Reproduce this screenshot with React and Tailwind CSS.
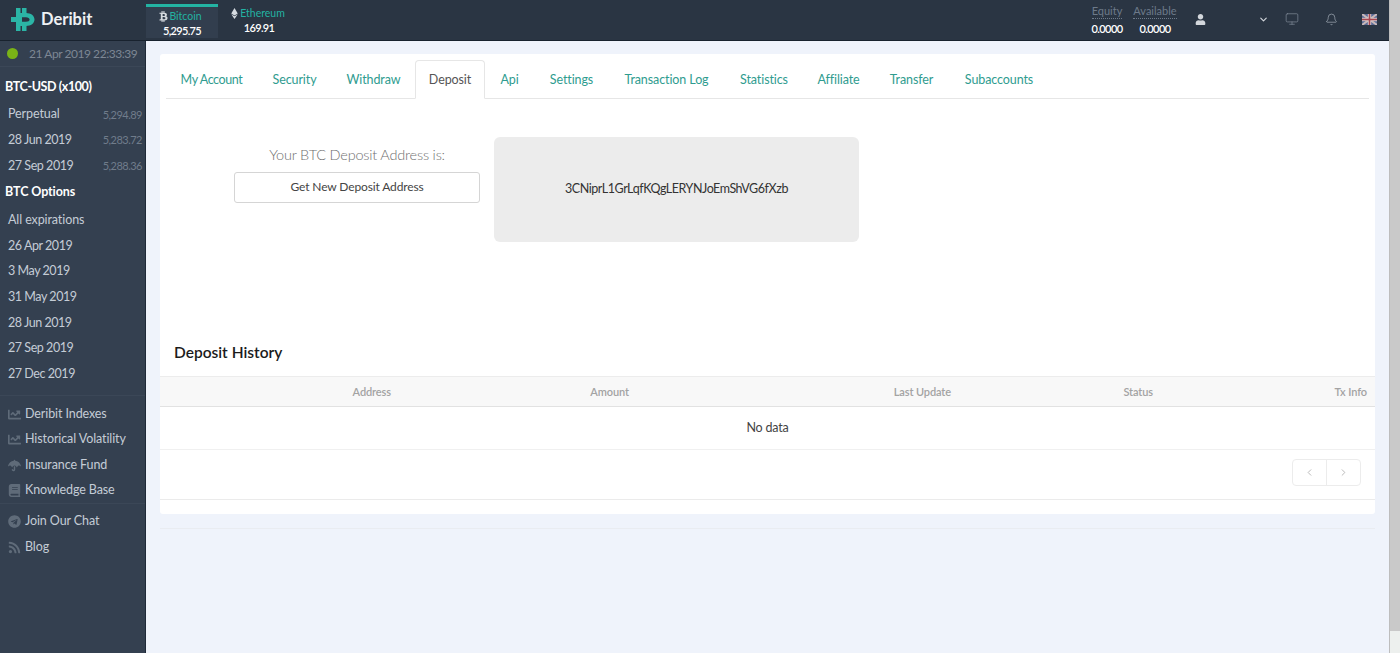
import React from "react";
import { FaUser, FaChartLine, FaUmbrella, FaBook, FaTelegram, FaRss, FaBtc, FaEthereum } from "react-icons/fa";
import { Monitor, Bell, ChevronDown, ChevronLeft, ChevronRight } from "lucide-react";

function Logo() {
  return (
    <svg width="25" height="23" viewBox="0 0 25 23" className="shrink-0">
      <g fill="#2bb5a6">
        <rect x="6" y="0" width="4.5" height="6" />
        <rect x="12" y="0" width="4.5" height="6" />
        <rect x="6" y="17" width="4.5" height="6" />
        <rect x="12" y="17" width="4.5" height="6" />
        <rect x="1" y="9" width="6" height="5" />
      </g>
      <path fillRule="evenodd" d="M6 5H16C21 5 24.5 7.8 24.5 11.5S21 18 16 18H6ZM12 9.2V13.8H16C18.2 13.8 19.6 12.8 19.6 11.5S18.2 9.2 16 9.2Z" fill="#2bb5a6" />
    </svg>
  );
}

function Flag() {
  return (
    <svg width="15" height="11" viewBox="0 0 15 11" className="shrink-0">
      <rect width="15" height="11" fill="#5a6a95" />
      <path d="M0 0L15 11M15 0L0 11" stroke="#c9b8b8" strokeWidth="2" />
      <rect x="5.8" width="3.4" height="11" fill="#d8d0d0" />
      <rect y="3.8" width="15" height="3.4" fill="#d8d0d0" />
      <rect x="6.7" width="1.6" height="11" fill="#a8454f" />
      <rect y="4.7" width="15" height="1.6" fill="#a8454f" />
    </svg>
  );
}

function Balance({ label, w }) {
  return (
    <div className={`flex flex-col items-center ${w}`}>
      <span className="text-[11px] leading-[14px] text-[#6d7a8a] border-b border-dotted border-[#6d7a8a] whitespace-nowrap">{label}</span>
      <span className="text-[11px] leading-[14px] mt-[3px] font-semibold tracking-[-0.6px] text-white">0.0000</span>
    </div>
  );
}

function Header() {
  return (
    <header className="h-[41px] shrink-0 flex items-stretch bg-[#2a3543] border-b border-[#18222e]">
      <div className="w-[146px] shrink-0 flex items-center pl-[10px] gap-[6px] pb-[1px]">
        <Logo />
        <span className="text-[16.5px] font-bold text-[#eef1f4]">Deribit</span>
      </div>
      <div className="w-[72px] mt-[4px] mb-[2px] border-t-[3px] border-[#23b3a3] bg-[#323e4e] flex flex-col items-center pt-[2px]">
        <span className="flex items-center pr-[4px] text-[10.5px] leading-[14px] text-[#23b3a3]"><FaBtc className="text-[#d5dae0] text-[11px]" />Bitcoin</span>
        <span className="text-[11px] leading-[14px] font-semibold tracking-[-0.7px] text-white mt-[1px]">5,295.75</span>
      </div>
      <div className="w-[82px] flex flex-col items-center pt-[6px]">
        <span className="flex items-center pr-[4px] text-[10.5px] leading-[14px] text-[#23b3a3]"><FaEthereum className="text-[#d5dae0] text-[11px]" />Ethereum</span>
        <span className="text-[11px] leading-[14px] font-semibold tracking-[-0.7px] text-white mt-[1px]">169.91</span>
      </div>
      <div className="flex-1" />
      <div className="flex items-start pt-[4px]">
        <Balance label="Equity" w="w-[30px]" />
        <div className="w-[11px]" />
        <Balance label="Available" w="w-[44px]" />
      </div>
      <div className="flex items-center text-[#d3d7dc] h-[38px]">
        <FaUser className="ml-[18px] text-[11px]" />
        <ChevronDown size={11} strokeWidth={2.5} className="ml-[52px]" />
        <Monitor size={14} strokeWidth={1.25} className="ml-[16px] text-[#7d8896]" />
        <Bell size={13} strokeWidth={1.25} className="ml-[26px] text-[#a6afb9]" />
        <div className="ml-[24px] mr-[12px]"><Flag /></div>
      </div>
    </header>
  );
}

function Row({ children, right, date }) {
  return (
    <div className="h-[25.6px] flex items-center justify-between pl-[8px] pr-[3px] text-[#c4ccd6] text-[12.5px]">
      <span className={date ? "tracking-[-0.45px] whitespace-nowrap" : "tracking-[-0.1px] whitespace-nowrap"}>{children}</span>
      {right && <span className="text-[11px] tracking-[-0.5px] text-[#707c8b]">{right}</span>}
    </div>
  );
}

function Title({ children, tight }) {
  return <div className={`h-[26px] flex items-center pl-[5px] text-[12.5px] font-bold text-white ${tight ? "tracking-[-0.4px]" : "tracking-[-0.1px]"}`}>{children}</div>;
}

function Link({ Icon, children }) {
  return (
    <div className="h-[25.5px] flex items-center pl-[8px] text-[#c4ccd6] text-[12.5px]">
      <span className="w-[17px] shrink-0 text-[#5f6b79]"><Icon className="text-[13px]" /></span>
      <span className="tracking-[-0.1px] whitespace-nowrap">{children}</span>
    </div>
  );
}

function Sidebar() {
  return (
    <aside className="w-[146px] shrink-0 bg-[#344050] border-r border-[#1f2a38]">
      <div className="h-[26px] flex items-center pl-[7px] border-b border-[#3b4757]">
        <span className="w-[11px] h-[11px] rounded-full bg-[#7ab317] shrink-0" />
        <span className="ml-[11px] text-[12px] tracking-[-0.45px] whitespace-nowrap text-[#7d8794]">21 Apr 2019 22:33:39</span>
      </div>
      <div className="pt-[7px]">
        <Title tight>BTC-USD (x100)</Title>
        <div className="pt-[2px] pb-[1px]">
          <Row right="5,294.89">Perpetual</Row>
          <Row right="5,283.72" date>28 Jun 2019</Row>
          <Row right="5,288.36" date>27 Sep 2019</Row>
        </div>
        <Title>BTC Options</Title>
        <div className="pt-[2px]">
          <Row>All expirations</Row>
          {["26 Apr 2019", "3 May 2019", "31 May 2019", "28 Jun 2019", "27 Sep 2019", "27 Dec 2019"].map((t) => (
            <Row key={t} date>{t}</Row>
          ))}
        </div>
      </div>
      <div className="mt-[8px] pt-[5.5px] border-t border-[#3b4757]">
        <Link Icon={FaChartLine}>Deribit Indexes</Link>
        <Link Icon={FaChartLine}>Historical Volatility</Link>
        <Link Icon={FaUmbrella}>Insurance Fund</Link>
        <Link Icon={FaBook}>Knowledge Base</Link>
      </div>
      <div className="pt-[4.5px] border-t border-[#3b4757]">
        <Link Icon={FaTelegram}>Join Our Chat</Link>
        <Link Icon={FaRss}>Blog</Link>
      </div>
    </aside>
  );
}

const tabs = [
  ["My Account", "w-[91px] tracking-[-0.4px]"],
  ["Security", "w-[75px]"],
  ["Withdraw", "w-[83px]"],
  ["Deposit", "w-[70px]"],
  ["Api", "w-[49px]"],
  ["Settings", "w-[75px]"],
  ["Transaction Log", "w-[115px]"],
  ["Statistics", "w-[80px]"],
  ["Affiliate", "w-[69px]"],
  ["Transfer", "w-[77px]"],
  ["Subaccounts", "w-[98px]"],
];

function Tabs() {
  return (
    <div className="mx-[6px] mt-[6px] h-[39px] flex border-b border-[#e6e6e6] text-[12.5px] tracking-[-0.1px]">
      {tabs.map(([t, w]) =>
        t === "Deposit" ? (
          <div key={t} className={`${w} h-[39px] pt-[1px] flex items-center justify-center bg-white border border-b-white border-[#e6e6e6] rounded-t-[4px] text-[#555]`}>{t}</div>
        ) : (
          <div key={t} className={`${w} h-[38px] pt-[2px] flex items-center justify-center text-[#2f9c8f]`}>{t}</div>
        )
      )}
    </div>
  );
}

function Table() {
  const cols = [
    ["Address", "w-[238px] pr-[7px]"],
    ["Amount", "w-[238px] pr-[7px]"],
    ["Last Update", "w-[322px] pr-[7px]"],
    ["Status", "w-[202px] pr-[7px]"],
    ["Tx Info", "flex-1 pr-[8px]"],
  ];
  return (
    <div>
      <div className="h-[31px] flex bg-[#f8f8f8] border-y border-[#ececec] border-b-[#e2e2e2]">
        {cols.map(([c, w]) => (
          <div key={c} className={`${w} pt-[1px] flex items-center justify-end text-[11px] tracking-[-0.1px] font-semibold text-[#a3a3a3]`}>{c}</div>
        ))}
      </div>
      <div className="h-[43px] flex items-center justify-center text-[12.5px] tracking-[-0.2px] text-[#444] border-b border-[#f0f0f0]">No data</div>
      <div className="h-[50px] flex justify-end pt-[9px] pr-[14px] border-b border-[#ebebeb]">
        <div className="h-[27px] flex border border-[#ececec] rounded-[4px] text-[#b5b5b5]">
          <div className="w-[34px] flex items-center justify-center border-r border-[#ececec]"><ChevronLeft size={11} /></div>
          <div className="w-[33px] flex items-center justify-center"><ChevronRight size={11} /></div>
        </div>
      </div>
    </div>
  );
}

function Card() {
  return (
    <div className="h-[460px] bg-white rounded-[3px] flex flex-col">
      <Tabs />
      <div className="flex items-start mt-[38px] ml-[74px]">
        <div className="w-[246px] mt-[9px] flex flex-col">
          <div className="text-center text-[14.5px] tracking-[-0.2px] leading-[18px] font-light text-[#6f6f6f]">Your BTC Deposit Address is:</div>
          <div className="mt-[8px] h-[31px] pb-[1px] flex items-center justify-center border border-[#d5d5d5] rounded-[3px] text-[12px] tracking-[-0.13px] text-[#444]">Get New Deposit Address</div>
        </div>
        <div className="ml-[14px] w-[365px] h-[105px] bg-[#ececec] rounded-[6px] flex items-center justify-center text-[12.5px] tracking-[-0.45px] text-[#333]">3CNiprL1GrLqfKQgLERYNJoEmShVG6fXzb</div>
      </div>
      <div className="mt-[98px] pl-[14px] h-[36px] text-[15.5px] leading-[24px] font-semibold text-[#1b1b1b]">Deposit History</div>
      <Table />
    </div>
  );
}

export default function App() {
  return (
    <div className="w-[1400px] h-[653px] flex overflow-hidden bg-[#eff3fb] font-['Lato','Noto_Sans',sans-serif]">
      <div className="w-[1389px] shrink-0 flex flex-col">
        <Header />
        <div className="flex-1 flex">
          <Sidebar />
          <main className="flex-1 pt-[13px] pl-[14px] pr-[14px]">
            <Card />
            <div className="mt-[14px] border-t border-[#e9ecf1]" />
          </main>
        </div>
      </div>
      <div className="flex-1 flex flex-col border-l border-[#bdbdbd]">
        <div className="h-[631px] bg-[#c9c9c9]" />
        <div className="flex-1 bg-[#edf0ee]" />
      </div>
    </div>
  );
}
